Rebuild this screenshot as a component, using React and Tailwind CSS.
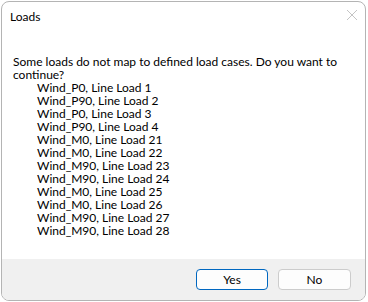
import React from 'react'

const loads = [
  'Wind_P0, Line Load 1',
  'Wind_P90, Line Load 2',
  'Wind_P0, Line Load 3',
  'Wind_P90, Line Load 4',
  'Wind_M0, Line Load 21',
  'Wind_M0, Line Load 22',
  'Wind_M90, Line Load 23',
  'Wind_M90, Line Load 24',
  'Wind_M0, Line Load 25',
  'Wind_M0, Line Load 26',
  'Wind_M90, Line Load 27',
  'Wind_M90, Line Load 28',
]

export default function App() {
  return (
    <div className="w-[368px] h-[302px] bg-white p-px" style={{ fontFamily: 'Lato, "Noto Sans", sans-serif' }}>
      <div className="w-[365px] h-[300px] flex flex-col rounded-lg border border-[#b4b4b4] overflow-hidden bg-white text-black">
        {/* title bar */}
        <div className="h-[30px] flex items-center justify-between pl-[8px] pr-[7px] shrink-0">
          <span className="text-[12px] leading-[14px]">Loads</span>
          <svg width="12" height="12" viewBox="0 0 12 12" className="-mt-[5px]">
            <path d="M1 1 L11 11 M11 1 L1 11" stroke="#c4c4c4" strokeWidth="1" fill="none" />
          </svg>
        </div>

        {/* body */}
        <div className="flex-1 pl-[11px] pr-[12px] pt-[23px] text-[12px] leading-[13px]">
          <p className="whitespace-nowrap">Some loads do not map to defined load cases. Do you want to<br />continue?</p>
          <div className="pl-[24px]">
            {loads.map((l, i) => (
              <div key={i}>{l}</div>
            ))}
          </div>
        </div>

        {/* footer */}
        <div className="h-[41px] shrink-0 bg-[#f0f0f0] flex items-center justify-end gap-[10px] pr-[14px]">
          <button className="w-[72px] h-[21px] rounded-[4px] bg-[#fdfdfd] border border-[#0067c0] text-[12px] leading-none">Yes</button>
          <button className="w-[73px] h-[21px] rounded-[4px] bg-[#fdfdfd] border border-[#cccccc] text-[12px] leading-none">No</button>
        </div>
      </div>
    </div>
  )
}
